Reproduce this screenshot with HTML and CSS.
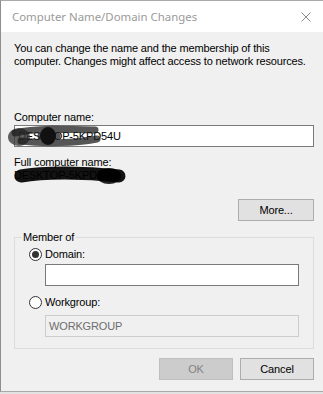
FILE: index.html
```html
<!DOCTYPE html>
<html lang="en">

<head>
    <meta charset="UTF-8">
    <title>Computer Name/Domain Changes</title>
    <link rel="stylesheet" href="styles.css">
</head>

<body>

    <div class="window">
        <div class="title-bar">
            <span class="title">Computer Name/Domain Changes</span>
            <svg class="close" width="10" height="10" viewBox="0 0 10 10">
                <path d="M0.5 0.5 L9.5 9.5 M9.5 0.5 L0.5 9.5" stroke="#8a8a8a" stroke-width="1" fill="none" />
            </svg>
        </div>

        <div class="client">
            <p class="intro">You can change the name and the membership of this computer. Changes might affect access to network resources.</p>

            <label class="label first-label">Computer name:</label>
            <div class="scribbled">
                <div class="textbox">DESKTOP-5KPD54U</div>
                <svg class="scribble one" width="130" height="26" viewBox="0 0 130 26">
                    <ellipse cx="14" cy="13" rx="11" ry="9" fill="#3a3a3a" opacity="0.8" />
                    <path d="M10 9 C30 4 60 5 90 6 M16 17 C40 20 70 19 92 15 M36 12 L52 12" stroke="#1e1e1e" stroke-width="7" stroke-linecap="round" fill="none" opacity="0.75" />
                    <ellipse cx="43" cy="12" rx="8" ry="9" fill="#111" />
                </svg>
            </div>

            <label class="label">Full computer name:</label>
            <div class="scribbled">
                <div class="value">DESKTOP-5KPD54U</div>
                <svg class="scribble two" width="120" height="20" viewBox="0 0 120 20">
                    <path d="M8 10 C30 6 70 6 106 10" stroke="#000" stroke-width="13" stroke-linecap="round" fill="none" opacity="0.92" />
                    <ellipse cx="96" cy="10" rx="12" ry="8" fill="#000" opacity="0.85" />
                </svg>
            </div>

            <div class="more-row">
                <button class="btn more">More...</button>
            </div>

            <fieldset class="group">
                <legend>Member of</legend>

                <div class="radio-row">
                    <span class="radio checked"></span>
                    <span>Domain:</span>
                </div>
                <div class="textbox indent"></div>

                <div class="radio-row second">
                    <span class="radio"></span>
                    <span>Workgroup:</span>
                </div>
                <div class="textbox indent disabled">WORKGROUP</div>
            </fieldset>

            <div class="buttons">
                <button class="btn ok" disabled>OK</button>
                <button class="btn">Cancel</button>
            </div>
        </div>
    </div>

</body>

</html>
```

FILE: styles.css
```css
* {
    margin: 0;
    padding: 0;
    box-sizing: border-box;
}

body {
    background-color: #e2e2e2;
    font-family: "Liberation Sans", Arial, sans-serif;
    font-size: 11px;
    line-height: 13px;
    letter-spacing: -0.15px;
    color: #000;
}

.window {
    width: 330px;
    height: 392px;
    border-top: 1px solid #a9a9a9;
    border-left: 1px solid #8f8f8f;
    border-bottom: 1px solid #a9a9a9;
    box-shadow: inset 1px 0 0 #c8c8c8;
    display: flex;
    flex-direction: column;
}

.title-bar {
    height: 31px;
    background-color: #fff;
    display: flex;
    align-items: center;
    padding: 0 0 0 11px;
}

.title {
    flex: 1;
    font-family: "Noto Sans", sans-serif;
    font-size: 11.4px;
    letter-spacing: 0;
    color: #9a9a9a;
    padding-bottom: 1px;
}

.close {
    margin-right: 19px;
    margin-top: 1px;
}

.client {
    flex: 1;
    background-color: #f0f0f0;
    padding: 10px 16px 0 13px;
    display: flex;
    flex-direction: column;
}

.intro {
    width: 305px;
}

.label {
    display: block;
}

.first-label {
    margin-top: 43px;
}

.scribbled {
    position: relative;
}

.textbox {
    height: 22px;
    margin-top: 1px;
    margin-bottom: 9px;
    background-color: #fff;
    border: 1px solid #7a7a7a;
    padding: 4px 3px;
}

.value {
    height: 13px;
    margin-bottom: 17px;
}

.scribble {
    position: absolute;
}

.scribble.one {
    left: -9px;
    top: 0;
}

.scribble.two {
    left: -1px;
    top: -3px;
}

.more-row {
    display: flex;
    justify-content: flex-end;
}

.btn {
    width: 74px;
    height: 22px;
    background-color: #e1e1e1;
    border: 1px solid #adadad;
    font-family: "Liberation Sans", Arial, sans-serif;
    font-size: 11px;
    letter-spacing: -0.15px;
    color: #000;
}

.btn.more {
    width: 76px;
}

.btn.ok {
    background-color: #cccccc;
    border-color: #bfbfbf;
    color: #838383;
}

.group {
    margin-top: 10px;
    border: 1px solid #dcdcdc;
    padding: 4px 14px 11px 14px;
    height: 118px;
}

.group legend {
    margin-left: -8px;
    padding: 0 2px;
}

.radio-row {
    display: flex;
    align-items: center;
    gap: 3px;
    height: 13px;
}

.radio-row.second {
    margin-top: 10px;
}

.radio {
    width: 13px;
    height: 13px;
    border: 1px solid #333;
    border-radius: 50%;
    background-color: #fff;
    display: flex;
    align-items: center;
    justify-content: center;
}

.radio.checked::after {
    content: "";
    width: 7px;
    height: 7px;
    border-radius: 50%;
    background-color: #333;
}

.textbox.indent {
    margin-left: 16px;
    margin-top: 3px;
    margin-bottom: 0;
}

.textbox.disabled {
    margin-top: 6px;
    background-color: #f0f0f0;
    border-color: #cccccc;
    color: #6d6d6d;
}

.buttons {
    margin-top: 9px;
    display: flex;
    justify-content: flex-end;
    gap: 7px;
}
```
